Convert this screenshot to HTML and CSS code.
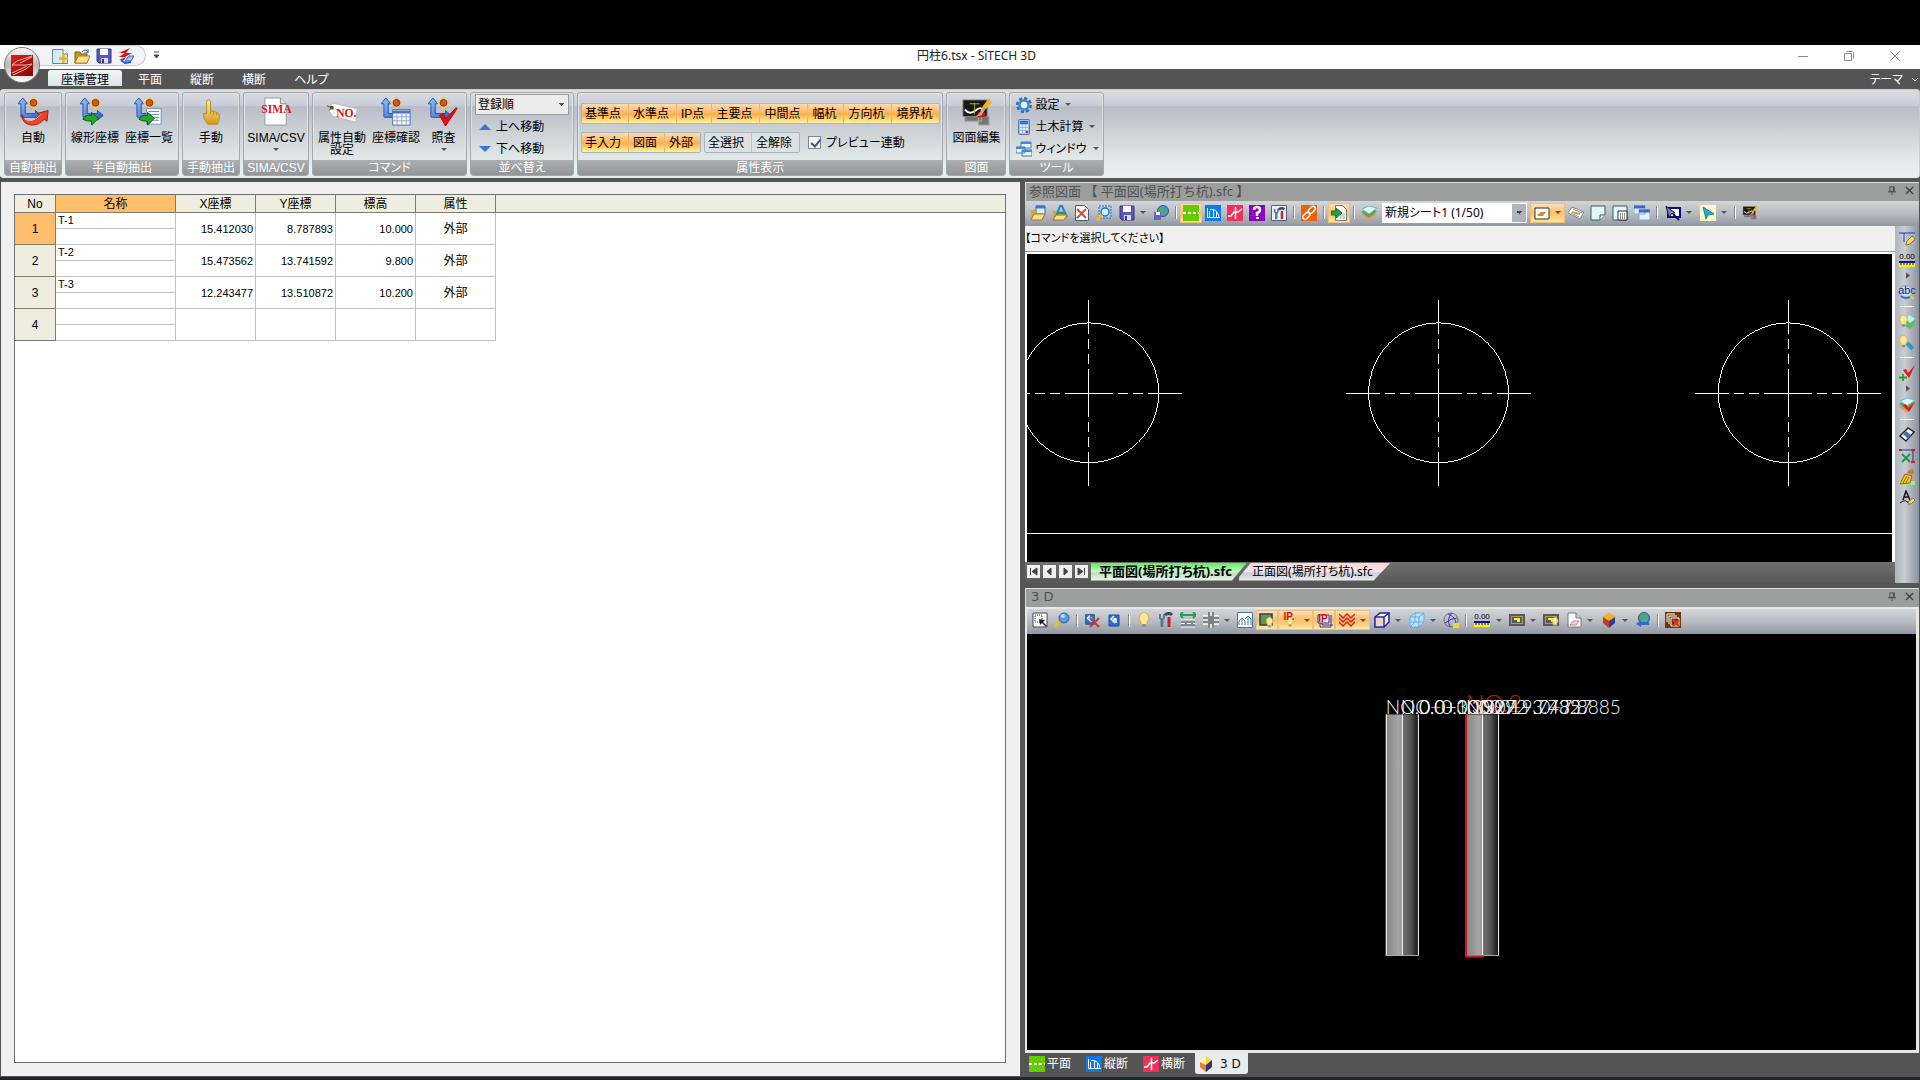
FILE: index.html
```html
<!DOCTYPE html>
<html lang="ja">
<head>
<meta charset="utf-8">
<title>円柱6.tsx - SiTECH 3D</title>
<link rel="stylesheet" href="styles.css">
</head>
<body>
<svg class="paints" aria-hidden="true">
  <defs>
    <linearGradient id="gb" x1="0" y1="0" x2="1" y2="1"><stop offset="0" stop-color="#9cc4f8"/><stop offset="1" stop-color="#2058c8"/></linearGradient>
    <linearGradient id="gy" x1="0" y1="0" x2="0" y2="1"><stop offset="0" stop-color="#fff0a0"/><stop offset="1" stop-color="#d89820"/></linearGradient>
    <linearGradient id="gr" x1="0" y1="0" x2="1" y2="1"><stop offset="0" stop-color="#e02018"/><stop offset="1" stop-color="#800808"/></linearGradient>
    <linearGradient id="cyl" x1="0" x2="1" y1="0" y2="0"><stop offset="0" stop-color="#858585"/><stop offset=".4" stop-color="#a6a6a6"/><stop offset=".5" stop-color="#989898"/><stop offset=".54" stop-color="#707070"/><stop offset=".75" stop-color="#585858"/><stop offset="1" stop-color="#161616"/></linearGradient>
  </defs>
</svg>
<svg class="sprite" aria-hidden="true">
  <symbol id="axis" viewBox="0 0 32 32">
    <path d="M5 1 10 7H7.500V17H18V14l6 5-6 5V21H4Q3 21 3 20V7H0Z" fill="url(#gb)" stroke="#2454b0"/>
    <path d="M16 0v12M10 6h12" stroke="#f8d030" stroke-width="3"/><circle cx="16" cy="6" r="3.500" fill="#d05828" stroke="#963010"/>
  </symbol>
  <symbol id="auto" viewBox="0 0 32 32"><use href="#axis" width="32" height="32"/><path d="M4 18q2 9 12 6 5-2 7-5l-3-2 11-3-1 11-3-2q-5 6-13 6Q4 28 4 18Z" fill="#ee4428" stroke="#a81808"/><path d="M7 23q7 5 17-5" stroke="#ffb8a0" fill="none"/></symbol>
  <symbol id="line-axis" viewBox="0 0 32 32"><use href="#axis" width="32" height="32"/><path d="M3 23q2-5 9-4v-3l7 6-7 7v-4q-6 0-9-2Z" fill="#28a828" stroke="#085808"/></symbol>
  <symbol id="list-axis" viewBox="0 0 32 32"><use href="#axis" width="32" height="32"/><path d="M13 12h15v16H13Z" fill="#fff" stroke="#7890b8"/><path d="M15 15h11M15 18h11M15 21h11M15 24h11" stroke="#6088c8"/><path d="M5 23q2-5 9-4v-3l7 6-7 7v-4q-6 0-9-2Z" fill="#28a828" stroke="#085808"/></symbol>
  <symbol id="grid-axis" viewBox="0 0 32 32"><use href="#axis" width="32" height="32"/><path d="M12 13h18v16H12Z" fill="#f4f8ff" stroke="#4870a8"/><path d="M12 14h18v3H12Z" fill="#4878c8"/><path d="M12 20.500h18M12 24.500h18M16.500 17v12M21.500 17v12M26 17v12" stroke="#98a8c0"/></symbol>
  <symbol id="check-axis" viewBox="0 0 32 32"><use href="#axis" width="32" height="32"/><path d="m12 19 4-2 2 6L29 11l1 1L18 30Z" fill="#e81010" stroke="#c00000"/></symbol>
  <symbol id="hand" viewBox="0 0 32 32"><path d="M11 17V5q0-2 2-2t2 2v9l7 2q2 1 2 3v4l-2 5H12L8 21v-4Z" fill="url(#gy)" stroke="#b88818"/><path d="M18 15v4m3-3v3M15 14v4" stroke="#b88818"/></symbol>
  <symbol id="sima" viewBox="0 0 32 32"><path d="M4 1h16l6 6v22H4Z" fill="#fff" stroke="#989898"/><path d="M20 1v6h6" fill="#ddd" stroke="#888"/><text x="16" y="16" text-anchor="middle" class="red-serif">SIMA</text></symbol>
  <symbol id="no" viewBox="0 0 32 32"><path d="m5 6 26 6-1 14-24-6-4-6Z" fill="#f8f8f8" stroke="#bbb"/><circle cx="5" cy="11" r="2" fill="#604828"/><path d="M5 11 0 9m5 2-3 3" stroke="#604828"/><text x="20" y="21" text-anchor="middle" class="red-serif">NO.</text></symbol>
  <symbol id="draw" viewBox="0 0 32 32"><path d="M18 20h11v9H18ZM4 20h17v5H4Z" fill="#777" stroke="#aaa"/><path d="M2 3h25v17H2Z" fill="#181818" stroke="#888"/><path d="M4 13q5 6 11 1t8 0" stroke="#fff" stroke-width="2" fill="none"/><path d="M14 6v12M9 7h10" stroke="#b0b020"/><path d="M17 16h8v5h-8Z" fill="#b02020"/><path d="m29 1 3 5-7 7-3-3Z" fill="#f0b818"/><path d="m22 10 3 3-4 6-6 1q5-3 7-10Z" fill="#d8a080"/></symbol>
  <symbol id="gear" viewBox="0 0 16 16"><circle cx="8" cy="8" r="6.500" fill="none" stroke="#3070b0" stroke-width="3" stroke-dasharray="3 2"/><circle cx="8" cy="8" r="4.500" fill="#e4f0fa" stroke="#3c8cd0" stroke-width="2.500"/></symbol>
  <symbol id="calc" viewBox="0 0 16 16"><rect x="2.500" y=".5" width="11" height="15" rx="1" fill="#98b8ee" stroke="#5878b8"/><path d="M4 2h8v3H4Z" fill="#4070c8"/><path d="M4 7h2M7 7h2M10 7h2M4 10h2M7 10h2M10 10h2M4 13h2M7 13h2" stroke="#fff" stroke-width="1.500"/><path d="M10 13h2" stroke="#d02020" stroke-width="2"/></symbol>
  <symbol id="windows" viewBox="0 0 16 16"><path d="M5 1h10v6H5ZM0 6h9v6H0ZM6 9h10v6H6Z" fill="#f4faff" stroke="#4878b0"/><path d="M5 2h10M0 7h9M6 10h10" stroke="#4888d8" stroke-width="2"/></symbol>
  <symbol id="new" viewBox="0 0 16 16"><path d="M.5 1.500h11l4 4v10H.5Z" fill="#d4ecfa" stroke="#688098"/><path d="M11 1v5h5" fill="#fff" stroke="#688098"/><path d="M11.500 6v9M7 10.500h9" stroke="#f0b020" stroke-width="2.500"/></symbol>
  <symbol id="open" viewBox="0 0 16 16"><path d="M1 4h5l1 2h6v9H1Z" fill="#c89828" stroke="#806010"/><path d="m1 15 3-7h12l-3 7Z" fill="#ffe490" stroke="#a88020"/><path d="M8 4q3-4 6 0M14 1v4h-4" stroke="#3870b0" fill="none"/></symbol>
  <symbol id="save" viewBox="0 0 16 16"><path d="M1 1h14v14H3l-2-2Z" fill="#5858b8" stroke="#383878"/><path d="M4 1h8v6H4Z" fill="#fff"/><path d="M5 10h7v5H5Z" fill="#dcdce8"/><path d="M6 11h2v4H6Z" fill="#383878"/></symbol>
  <symbol id="run" viewBox="0 0 16 16"><path d="m12 0-9 4-2 1h6l-6 4h6l7-4H8ZM1 12l7-3-2 3Z" fill="#d01818"/><path d="m7 13 4-5h5l-3 5Z" fill="#a0c8ff" stroke="#3068c8"/><path d="m3 12 4 3 6-1" stroke="#2858b8" stroke-width="2" fill="none"/></symbol>
  <symbol id="blueopen" viewBox="0 0 16 16"><path d="M6 1h9v9H6Z" fill="#dcecff" stroke="#3868a8"/><path d="M6 2h9" stroke="#3878d8" stroke-width="3"/><path d="M1 5h5v3h7v6H1Z" fill="#d8a830"/><path d="m1 15 3-6h11l-3 6Z" fill="#ffe080" stroke="#a07820"/></symbol>
  <symbol id="aopen" viewBox="0 0 16 16"><path d="M1 6h13v9H1Z" fill="#d8a830"/><path d="m4 12 4-11h2l5 11M6 8h7" fill="none" stroke="#1890b8" stroke-width="2"/><path d="m1 15 3-5h11l-3 5Z" fill="#ffe080" stroke="#a07820"/></symbol>
  <symbol id="xpage" viewBox="0 0 16 16"><path d="M1.500.5h9l4 4v11h-13Z" fill="#fff" stroke="#505870"/><path d="m3 4 9 9m0-9-9 9" stroke="#d85030" stroke-width="2"/></symbol>
  <symbol id="search" viewBox="0 0 16 16"><path d="M3 1h12v12H3Z" fill="#a8ccf4" stroke="#3868b0" stroke-dasharray="2 1"/><circle cx="9" cy="7" r="4" fill="#d4f0ff" stroke="#2870c8" stroke-width="1.500"/><path d="m1 15 5-5" stroke="#e8c020" stroke-width="3"/></symbol>
  <symbol id="globe" viewBox="0 0 16 16"><circle cx="10" cy="6" r="5.500" fill="#4898d8" stroke="#205888"/><path d="m6 3 3-1 2 3-2 4-4-1Zm6 0 3 2-2 4Z" fill="#48b050"/><path d="M1 7h7v8H1Z" fill="#6868b0"/><path d="M3 7h4v3H3Z" fill="#fff"/></symbol>
  <symbol id="plan" viewBox="0 0 16 16"><path d="M0 0h16v16H0Z" fill="#62cc00"/><path d="M0 8h16" stroke="#fff" stroke-width="2" stroke-dasharray="3 2"/></symbol>
  <symbol id="profile" viewBox="0 0 16 16"><path d="M0 0h16v16H0Z" fill="#087ce8"/><path d="M2.500 3v9.500H15M4.500 6v6M5 4.500h3.500V12M11.500 7v5M8.500 5q4 0 5.500 7" stroke="#fff" fill="none"/></symbol>
  <symbol id="section" viewBox="0 0 16 16"><path d="M0 0h16v16H0Z" fill="#f33058"/><path d="M1 11h3l3-4h4l4-3M8.500 2v12" stroke="#fff" stroke-width="1.500" fill="none"/></symbol>
  <symbol id="help" viewBox="0 0 16 16"><path d="M0 0h16v16H0Z" fill="#9000c0"/><path d="M5 5q0-3 3-3t3 3q0 2-3 3v3" fill="none" stroke="#fff" stroke-width="2.500"/><path d="M7 12h3v2H7Z" fill="#fff"/></symbol>
  <symbol id="wrench" viewBox="0 0 16 16"><path d="M2 2v4l2 2 2-2V2" stroke="#5878a0" stroke-width="2" fill="none"/><path d="M4 8v7" stroke="#5878a0" stroke-width="3"/><path d="M7 3q4-3 7 0" stroke="#404858" stroke-width="3" fill="none"/><path d="M11 5v10" stroke="#c02828" stroke-width="3"/></symbol>
  <symbol id="tools" viewBox="0 0 16 16"><path d="M.5.5h15v15H.5Z" fill="#e8f4fa" stroke="#506078"/><use href="#wrench" x="2" y="2" width="13" height="13"/></symbol>
  <symbol id="link" viewBox="0 0 16 16"><path d="M0 0h16v16H0Z" fill="#f06008"/><g fill="none" stroke="#fff" stroke-width="1.500"><rect x="7" y="2.500" width="8" height="4.500" rx="2.200" transform="rotate(-45 11 5)"/><rect x="1.500" y="8.500" width="8" height="4.500" rx="2.200" transform="rotate(-45 5.500 11)"/></g></symbol>
  <symbol id="import" viewBox="0 0 16 16"><path d="M4.500.5h7l4 4v11h-11Z" fill="#fff" stroke="#707880"/><path d="M9 9h5M9 11h5M9 13h5" stroke="#a0a8b0"/><path d="M0 6h5V3l6 5-6 5v-3H0Z" fill="#28a040" stroke="#107028"/></symbol>
  <symbol id="layers" viewBox="0 0 16 16"><path d="m0 10 8 6 8-7-8-3Z" fill="#e89858"/><path d="m0 7 8 6 8-7-8-3Z" fill="#58a858"/><path d="m1 4 7 5 8-6-8-2Z" fill="#d8fafa" stroke="#68b8c8"/></symbol>
  <symbol id="frame" viewBox="0 0 16 16"><path d="M1 3h14v11H1Z" fill="#fff" stroke="#303030"/><path d="m3 10 4-3h5l-3 4H5Z" fill="#c89020"/></symbol>
  <symbol id="tilt" viewBox="0 0 16 16"><path d="m4 2 12 5-4 7L0 8Z" fill="#fff" stroke="#888"/><path d="m5 4 9 4M3 8l8 4" stroke="#50a0c0"/><path d="m4 7 8 2" stroke="#e8a020" stroke-width="2"/></symbol>
  <symbol id="note" viewBox="0 0 16 16"><path d="M1 1h14v9l-5 5H1Z" fill="#e0fafa" stroke="#405860"/><path d="M15 10h-5v5" fill="#fff" stroke="#405860"/></symbol>
  <symbol id="notegrid" viewBox="0 0 16 16"><path d="M1 1h14v14H1Z" fill="#e0fafa" stroke="#405860"/><path d="M6 6h9v9H6Z" fill="#fff" stroke="#303030"/><path d="M8 9h6M8 11h6M8 13h6" stroke="#303030" stroke-dasharray="1 1"/></symbol>
  <symbol id="cascade" viewBox="0 0 16 16"><path d="M0 1h11v8H0ZM5 5h11v10H5Z" fill="#e4f2ff" stroke="#80a8e0"/><path d="M0 2h11M5 6h11" stroke="#3868c8" stroke-width="3"/></symbol>
  <symbol id="pick" viewBox="0 0 16 16"><path d="M3 3h12v9H3Z" fill="#fff" stroke="#0808a0" stroke-width="2"/><path d="m1 1 9 7-4 1-2 4Z" fill="#6888b0" stroke="#101030"/><path d="m8 9 6 6" stroke="#101030" stroke-width="2"/></symbol>
  <symbol id="arrowbox" viewBox="0 0 16 16"><path d="M0 0h16v16H0Z" fill="#fffac0"/><path d="m3 2 11 7-6 1-2 4Z" fill="#28a8c8" stroke="#1888a8"/></symbol>
  <symbol id="pencil" viewBox="0 0 16 16"><path d="M0 2h16M5 2v9" stroke="#2838d0" fill="none"/><path d="m7 14 1-4 5-5 3 3-5 5Z" fill="#f8d860" stroke="#907838"/></symbol>
  <symbol id="ruler" viewBox="0 0 18 16"><text x="9" y="7" text-anchor="middle" class="tiny">0.00</text><path d="M1 11h16v4H1Z" fill="#f8f020"/><path d="M1 10h16" stroke="#101090" stroke-width="2"/><path d="M3 11v2m3-2v2m3-2v2m3-2v2m3-2v2" stroke="#101090"/></symbol>
  <symbol id="abc" viewBox="0 0 18 16"><circle cx="8" cy="8" r="6.500" fill="#c8dcff" stroke="#88a8e8"/><path d="M3 12q5 4 10 0" stroke="#4068c8" stroke-width="2" fill="none"/><path d="m12 12 4 3" stroke="#f0d020" stroke-width="2"/><text x="9" y="10" text-anchor="middle" class="abc">abc</text></symbol>
  <symbol id="bulb" viewBox="0 0 16 16"><path d="M5 10Q2 7 4 3q4-5 8 0 2 4-1 7v3H5Z" fill="#ffe898" stroke="#d8b040"/><path d="M6 12h4v3H6Z" fill="#889098"/></symbol>
  <symbol id="bulblayer" viewBox="0 0 16 16"><path d="m6 4 5-3 5 4v6l-5 4-5-3Z" fill="#68b868"/><path d="m6 4 5-3 5 4-5 4Z" fill="#b8f4f8"/><use href="#bulb" x="-2" y="0" width="13" height="14"/></symbol>
  <symbol id="bulbpen" viewBox="0 0 16 16"><use href="#bulb" x="-2" y="0" width="13" height="13"/><path d="m8 8 6 6" stroke="#3898c0" stroke-width="4"/></symbol>
  <symbol id="pluscheck" viewBox="0 0 16 16"><path d="m4 5 3-1 2 4 7-8-6 13Z" fill="#e01818"/><path d="M4 9v7M0 12.500h8" stroke="#30a030" stroke-width="2"/></symbol>
  <symbol id="layercheck" viewBox="0 0 16 16"><use href="#layers" width="16" height="16"/><path d="m4 8 3-1 2 4 7-6-6 10Z" fill="#e01818"/></symbol>
  <symbol id="eraser" viewBox="0 0 16 16"><path d="m1 9 8-8 6 4-8 9Z" fill="#f8f8ff" stroke="#202838" stroke-width="1.500"/><path d="m4 7 3-3 5 4-3 4Z" fill="#4870b8"/></symbol>
  <symbol id="cut" viewBox="0 0 16 16"><path d="M1 2h14M14 2v13" stroke="#2030b8" fill="none"/><path d="m3 6 8 8m0-8-8 8" stroke="#209840" stroke-width="2"/><path d="M0 1h3v2H0Zm12 0h4v2h-4Zm0 12h4v2h-4Z" fill="#e01818"/></symbol>
  <symbol id="broom" viewBox="0 0 16 16"><path d="M0 12h16v4H0Z" fill="#98f080"/><path d="m10 1 4-1 1 4-2 2-5-2Z" fill="#c08040"/><path d="m6 5 7 2-2 7-10 1Z" fill="#f8c828" stroke="#a06010"/><path d="m8 7-4 7m6-6-3 6" stroke="#a06010"/></symbol>
  <symbol id="apen" viewBox="0 0 16 16"><path d="m4 10 3-9 4 9M5 7h5" stroke="#181818" stroke-width="1.500" fill="none"/><path d="M1 13q6-5 9 1" stroke="#181818" fill="none"/><path d="m9 14 1-3 4-3 2 2-4 4Z" fill="#f8d860" stroke="#907838"/></symbol>
  <symbol id="selwin" viewBox="0 0 16 16"><path d="M1 1h14v14H1Z" fill="#fff" stroke="#484858"/><path d="M3 3h7v7H3Z" fill="none" stroke="#303040" stroke-dasharray="1 1"/><path d="m7 7 6 1-2 2 4 4-1 1-4-4-2 2Z" fill="#182038"/></symbol>
  <symbol id="lens" viewBox="0 0 16 16"><path d="m1 15 6-7" stroke="#e8c018" stroke-width="3"/><circle cx="10" cy="6" r="5" fill="#5898e8" stroke="#3060a8"/><circle cx="9" cy="4" r="2" fill="#c0e0ff"/></symbol>
  <symbol id="undo" viewBox="0 0 16 16"><path d="M3 3h10v11H3Z" fill="#2870d0" stroke="#1848a0"/><path d="m8 4-3 3 3 3V7h2v4" stroke="#fff" fill="none" stroke-width="1.500"/></symbol>
  <symbol id="undox" viewBox="0 0 16 16"><use href="#undo" x="-1" width="14" height="14"/><path d="m6 6 9 9m0-9-9 9" stroke="#e03020" stroke-width="2"/></symbol>
  <symbol id="span" viewBox="0 0 16 16"><path d="M0 3h16M3 0 0 3l3 3M13 0l3 3-3 3" fill="none" stroke="#20a058" stroke-width="2"/><path d="M1 8h14v7H1Z" fill="#808890"/><path d="M1 11.500h14" stroke="#fff" stroke-dasharray="4 2"/><path d="M1 8h14M1 15h14" stroke="#fff"/></symbol>
  <symbol id="cross" viewBox="0 0 16 16"><path d="M0 4h16v8H0ZM5 0h6v16H5Z" fill="#808080"/><path d="M0 8h5m6 0h5M8 0v4m0 8v4M0 4h5M11 4h5M0 12h5M11 12h5" stroke="#fff" stroke-width="1.500"/></symbol>
  <symbol id="house" viewBox="0 0 16 16"><path d="M.5.500h15v15H.5Z" fill="#fff" stroke="#4878a8"/><path d="M2 13V9l3-3 3 3v4m0-6 3-3 3 3v6M5 6v7m6-9v9" fill="none" stroke="#4078b0"/></symbol>
  <symbol id="greenbulb" viewBox="0 0 16 16"><path d="M1 2h12v11H1Z" fill="#58a048" stroke="#303868" stroke-width="1.500"/><use href="#bulb" x="5" y="5" width="11" height="11"/></symbol>
  <symbol id="ipbulb" viewBox="0 0 18 16"><use href="#bulb" x="4" y="4" width="10" height="12"/><text x="8" y="8" text-anchor="middle" class="ip">IP.</text></symbol>
  <symbol id="iplist" viewBox="0 0 18 16"><path d="M5 7v8h11V3M7 5v8h11" fill="none" stroke="#3838a0"/><path d="M3 3h11v8H3Z" fill="#ffe8d0" stroke="#3838a0"/><text x="8" y="10" text-anchor="middle" class="ip">IP</text></symbol>
  <symbol id="zig" viewBox="0 0 16 16"><path d="m0 2 4 4 4-4 4 4 4-4M0 6l4 4 4-4 4 4 4-4M0 10l4 4 4-4 4 4 4-4" fill="none" stroke="#d02020" stroke-width="1.500"/></symbol>
  <symbol id="cube" viewBox="0 0 16 16"><path d="M1 5 6 1h9v9l-5 5H1Z" fill="#fff" stroke="#2020a0" stroke-width="1.500"/><path d="M1 5h9v10M10 5l5-4" fill="none" stroke="#2020a0" stroke-width="1.500"/><path d="M2 6h7v8H2Z" fill="#e8d8c8"/></symbol>
  <symbol id="bcube" viewBox="0 0 16 16"><path d="m1 5 5-4h9v9l-5 5H1Z" fill="#c0e0ff" stroke="#60a8e8"/><path d="M1 5h9v10M10 5l5-4M6 1v9H1m5 0 9 0M6 10l-5 5" fill="none" stroke="#60a8e8"/></symbol>
  <symbol id="sphere" viewBox="0 0 16 16"><circle cx="8" cy="8" r="7" fill="none" stroke="#687088"/><path d="M2 11Q8 6 14 6M9 1Q3 7 7 15M5 2q8 3 8 10" stroke="#3838c0" fill="none"/><path d="M10 11h6v5h-6Z" fill="#f0d830"/></symbol>
  <symbol id="yframe" viewBox="0 0 16 16"><path d="M0 2h16v12H0Z" fill="#585858"/><path d="M2.500 4.500h11v7h-11Z" fill="none" stroke="#f8f040" stroke-dasharray="1 1"/><path d="M5 6h6v4H8V8H5Z" fill="#f8f040"/></symbol>
  <symbol id="ybulb" viewBox="0 0 16 16"><use href="#yframe" width="16" height="16"/><use href="#bulb" x="7" y="4" width="10" height="12"/></symbol>
  <symbol id="page" viewBox="0 0 16 16"><path d="M2 1h8l5 5v9H2Z" fill="#fff" stroke="#707888"/><path d="M10 1v5h5" fill="#ccd" stroke="#707888"/><path d="m4 13 3-4h6l-3 4Z" fill="#f8d0c8" stroke="#d08880"/></symbol>
  <symbol id="box" viewBox="0 0 16 16"><path d="m8 1 6 3v7l-6 5-6-5V4Z" fill="#f0b020"/><path d="m2 5 6 4v7l-6-5Z" fill="#c83828"/><path d="m14 5-6 4v7l6-5Z" fill="#2840a0"/></symbol>
  <symbol id="box2" viewBox="0 0 16 16"><path d="m8 0 6 4v7l-6 5-6-5V4Z" fill="#f8d848"/><path d="m2 6 6 3v7l-6-5Z" fill="#f07828"/><path d="m14 4-6 5v7l6-5Z" fill="#283878"/><path d="M2 4 8 0v9L2 6Z" fill="#fff0c0"/></symbol>
  <symbol id="globeback" viewBox="0 0 16 16"><circle cx="9" cy="6" r="5.500" fill="#48a0c8" stroke="#205888"/><path d="m5 3 4-2 2 4-3 4-3-3Z" fill="#50b050"/><path d="m1 12 5-4v2h8v3H6v2Z" fill="#3868c8"/></symbol>
  <symbol id="stackx" viewBox="0 0 16 16"><path d="M0 0h16v16H0Z" fill="#703808"/><path d="M2 10V2h8M4 12V4h8M6 6h8v8H6Z" fill="none" stroke="#fff"/><path d="m8 8 6 6m0-6-6 6" stroke="#e83818" stroke-width="2"/></symbol>
  <symbol id="pin" viewBox="0 0 10 10"><path d="M2 1h5v5H2ZM6 1v5M0 6.500h9M4.500 7v3" fill="none" stroke="#444"/></symbol>
  <symbol id="close" viewBox="0 0 10 10"><path d="m1 1 8 8m0-8L1 9" stroke="#444" stroke-width="1.500"/></symbol>
</svg>

<div class="app">
  <header class="titlebar">
    <div class="qat">
      <button aria-label="新規"><svg class="i"><use href="#new"/></svg></button>
      <button aria-label="開く"><svg class="i"><use href="#open"/></svg></button>
      <button aria-label="保存"><svg class="i"><use href="#save"/></svg></button>
      <button aria-label="実行"><svg class="i"><use href="#run"/></svg></button>
    </div>
    <button class="qat-more" aria-label="カスタマイズ"><svg width="7" height="8"><path d="M1 1h5M1 4h5L3.500 7Z" fill="#444" stroke="#444"/></svg></button>
    <h1>円柱6.tsx - SiTECH 3D</h1>
    <div class="winbtns">
      <button aria-label="最小化"><svg width="12" height="12"><path d="M1 6.500h10" stroke="#888"/></svg></button>
      <button aria-label="元に戻す"><svg width="12" height="12"><path d="M1.500 3.500h7v7h-7ZM3.500 1.500h6l1 1v6" fill="none" stroke="#888"/></svg></button>
      <button aria-label="閉じる"><svg width="12" height="12"><path d="m1 1 10 10m0-10L1 11" stroke="#888"/></svg></button>
    </div>
  </header>
  <button class="orb" aria-label="メニュー"><svg viewBox="0 0 38 38"><defs><linearGradient id="orbg" x1="0" y1="0" x2="0" y2="1"><stop offset="0" stop-color="#fff"/><stop offset=".5" stop-color="#b8b8bc"/><stop offset="1" stop-color="#fff"/></linearGradient></defs><circle cx="19" cy="19" r="17.500" fill="url(#orbg)" stroke="#777"/><path d="M8 9h22v21H8Z" fill="url(#gr)"/><path d="M29 10 14 15 9 19h14l6-1-6 5-13 6m-1-2 15-7m5-9-12 6" fill="none" stroke="#f0b0a0"/></svg></button>
  <nav class="tabs">
    <a class="on" href="#t1">座標管理</a><a href="#t2">平面</a><a href="#t3">縦断</a><a href="#t4">横断</a><a href="#t5">ヘルプ</a>
    <a class="theme" href="#theme">テーマ <svg width="7" height="5"><path d="m0 1 3 3 3-3" fill="none" stroke="#fff"/></svg></a>
  </nav>
  <section class="ribbon">
    <div class="group"><div class="body"><button class="big narrow"><svg><use href="#auto"/></svg>自動</button></div><h2>自動抽出</h2></div>
    <div class="group"><div class="body"><button class="big"><svg><use href="#line-axis"/></svg>線形座標</button><button class="big"><svg><use href="#list-axis"/></svg>座標一覧</button></div><h2>半自動抽出</h2></div>
    <div class="group"><div class="body"><button class="big narrow"><svg><use href="#hand"/></svg>手動</button></div><h2>手動抽出</h2></div>
    <div class="group"><div class="body"><button class="big wider"><svg><use href="#sima"/></svg>SIMA/CSV<i class="caret"></i></button></div><h2>SIMA/CSV</h2></div>
    <div class="group"><div class="body"><button class="big"><svg><use href="#no"/></svg>属性自動<br>設定</button><button class="big"><svg><use href="#grid-axis"/></svg>座標確認</button><button class="big slim"><svg><use href="#check-axis"/></svg>照査<i class="caret"></i></button></div><h2>コマンド</h2></div>
    <div class="group"><div class="body stack">
      <select aria-label="並べ替え"><option>登録順</option></select>
      <button class="small"><svg width="12" height="6"><path d="M0 6 6 0l6 6Z" fill="#3878d8"/></svg>上へ移動</button>
      <button class="small"><svg width="12" height="6"><path d="m0 0 6 6 6-6Z" fill="#3878d8"/></svg>下へ移動</button>
    </div><h2>並べ替え</h2></div>
    <div class="group"><div class="body attrs">
      <div class="row"><div class="seg hot"><button>基準点</button><button>水準点</button><button>IP点</button><button>主要点</button><button>中間点</button><button>幅杭</button><button>方向杭</button><button>境界杭</button></div></div>
      <div class="row"><div class="seg hot"><button>手入力</button><button>図面</button><button>外部</button></div><div class="seg"><button>全選択</button><button>全解除</button></div><label><input type="checkbox" checked>プレビュー連動</label></div>
    </div><h2>属性表示</h2></div>
    <div class="group"><div class="body"><button class="big"><svg><use href="#draw"/></svg>図面編集</button></div><h2>図面</h2></div>
    <div class="group"><div class="body stack tools">
      <button class="small"><svg class="i"><use href="#gear"/></svg>設定<i class="caret"></i></button>
      <button class="small"><svg class="i"><use href="#calc"/></svg>土木計算<i class="caret"></i></button>
      <button class="small"><svg class="i"><use href="#windows"/></svg>ウィンドウ<i class="caret"></i></button>
    </div><h2>ツール</h2></div>
  </section>

  <main>
    <section class="left">
      <div class="sheet">
        <table>
          <colgroup><col class="c-no"><col class="c-name"><col class="c-val"><col class="c-val"><col class="c-val"><col class="c-val"><col></colgroup>
          <thead><tr><th>No</th><th class="sel">名称</th><th>X座標</th><th>Y座標</th><th>標高</th><th>属性</th><th class="last"></th></tr></thead>
          <tbody>
            <tr><th class="sel">1</th><td class="name"><div>T-1</div><div></div></td><td>15.412030</td><td>8.787893</td><td>10.000</td><td class="mid">外部</td></tr>
            <tr><th>2</th><td class="name"><div>T-2</div><div></div></td><td>15.473562</td><td>13.741592</td><td>9.800</td><td class="mid">外部</td></tr>
            <tr><th>3</th><td class="name"><div>T-3</div><div></div></td><td>12.243477</td><td>13.510872</td><td>10.200</td><td class="mid">外部</td></tr>
            <tr><th>4</th><td class="name"><div></div><div></div></td><td></td><td></td><td></td><td></td></tr>
          </tbody>
        </table>
      </div>
    </section>

    <div class="right">
      <section class="pane ref">
        <div class="dock"><h2>参照図面 【 平面図(場所打ち杭).sfc 】</h2><button aria-label="固定"><svg><use href="#pin"/></svg></button><button aria-label="閉じる"><svg><use href="#close"/></svg></button></div>
        <div class="bar">
          <button><svg class="i"><use href="#blueopen"/></svg></button><button><svg class="i"><use href="#aopen"/></svg></button><button><svg class="i"><use href="#xpage"/></svg></button><button><svg class="i"><use href="#search"/></svg></button><button class="dd"><svg class="i"><use href="#save"/></svg><i class="caret"></i></button><button><svg class="i"><use href="#globe"/></svg></button><hr>
          <button class="hl"><svg class="i"><use href="#plan"/></svg></button><button><svg class="i"><use href="#profile"/></svg></button><button><svg class="i"><use href="#section"/></svg></button><button><svg class="i"><use href="#help"/></svg></button><button><svg class="i"><use href="#tools"/></svg></button><hr>
          <button><svg class="i"><use href="#link"/></svg></button><hr><button class="hl"><svg class="i"><use href="#import"/></svg></button><hr><button><svg class="i"><use href="#layers"/></svg></button>
          <select aria-label="シート"><option>新規シート1 (1/50)</option></select>
          <button class="dd hl"><svg class="i"><use href="#frame"/></svg><i class="caret"></i></button><button><svg class="i"><use href="#tilt"/></svg></button><button><svg class="i"><use href="#note"/></svg></button><button><svg class="i"><use href="#notegrid"/></svg></button><button><svg class="i"><use href="#cascade"/></svg></button><hr>
          <button class="dd"><svg class="i"><use href="#pick"/></svg><i class="caret"></i></button><button class="dd"><svg class="i"><use href="#arrowbox"/></svg><i class="caret"></i></button><hr><button><svg class="i"><use href="#draw"/></svg></button>
        </div>
        <div class="split">
          <div class="work">
            <p class="prompt">【コマンドを選択してください】</p>
            <div class="canvas flat"><svg viewBox="0 0 866 308" preserveAspectRatio="none">
              <g fill="none" stroke="#fff" shape-rendering="crispEdges">
                <circle cx="62" cy="139" r="70"/><circle cx="412" cy="139" r="70"/><circle cx="762" cy="139" r="70"/>
                <path d="M62 46.500v186M412 46.500v186M762 46.500v186M-31 139.500h186M319 139.500h186M669 139.500h186" stroke-dasharray="34 5 10 5 10 5 48 5 10 5 10 5 34"/>
                <path d="M0 279.500h866"/>
              </g></svg></div>
            <div class="sheets">
              <button aria-label="最初"><svg viewBox="0 0 13 13"><path d="M3.500 3v7M10 3v7L5 6.500Z"/></svg></button><button aria-label="前"><svg viewBox="0 0 13 13"><path d="M8 3v7L4 6.500Z"/></svg></button><button aria-label="次"><svg viewBox="0 0 13 13"><path d="M5 3v7l4-3.500Z"/></svg></button><button aria-label="最後"><svg viewBox="0 0 13 13"><path d="M3 3v7l5-3.500ZM9.500 3v7"/></svg></button>
              <a class="tab on" href="#s1">平面図(場所打ち杭).sfc</a><a class="tab" href="#s2">正面図(場所打ち杭).sfc</a>
            </div>
          </div>
          <div class="vbar">
            <button><svg class="i"><use href="#pencil"/></svg></button><button><svg class="w"><use href="#ruler"/></svg></button><i class="rt"></i><button><svg class="w"><use href="#abc"/></svg></button><hr>
            <button><svg class="i"><use href="#bulblayer"/></svg></button><button><svg class="i"><use href="#bulbpen"/></svg></button><hr>
            <button><svg class="i"><use href="#pluscheck"/></svg></button><i class="rt"></i><button><svg class="i"><use href="#layercheck"/></svg></button><hr>
            <button><svg class="i"><use href="#eraser"/></svg></button><button><svg class="i"><use href="#cut"/></svg></button><button><svg class="i"><use href="#broom"/></svg></button><button><svg class="i"><use href="#apen"/></svg></button>
          </div>
        </div>
      </section>

      <section class="pane view">
        <div class="dock"><h2 class="wide">3 D</h2><button aria-label="固定"><svg><use href="#pin"/></svg></button><button aria-label="閉じる"><svg><use href="#close"/></svg></button></div>
        <div class="inner">
        <div class="bar">
          <button><svg class="i"><use href="#selwin"/></svg></button><button><svg class="i"><use href="#lens"/></svg></button><hr><button><svg class="i"><use href="#undox"/></svg></button><button><svg class="i"><use href="#undo"/></svg></button><hr>
          <button><svg class="i"><use href="#bulb"/></svg></button><button><svg class="i"><use href="#wrench"/></svg></button><button><svg class="i"><use href="#span"/></svg></button><button class="dd"><svg class="i"><use href="#cross"/></svg><i class="caret"></i></button><button><svg class="i"><use href="#house"/></svg></button><button class="hl"><svg class="i"><use href="#greenbulb"/></svg></button><button class="dd hl"><svg class="w"><use href="#ipbulb"/></svg><i class="caret"></i></button><button class="hl"><svg class="w"><use href="#iplist"/></svg></button><button class="dd hl"><svg class="i"><use href="#zig"/></svg><i class="caret"></i></button><button class="dd"><svg class="i"><use href="#cube"/></svg><i class="caret"></i></button><button class="dd"><svg class="i"><use href="#bcube"/></svg><i class="caret"></i></button><button><svg class="i"><use href="#sphere"/></svg></button><hr>
          <button class="dd"><svg class="w"><use href="#ruler"/></svg><i class="caret"></i></button><button class="dd"><svg class="i"><use href="#yframe"/></svg><i class="caret"></i></button><button><svg class="i"><use href="#ybulb"/></svg></button><button class="dd"><svg class="i"><use href="#page"/></svg><i class="caret"></i></button><button class="dd"><svg class="i"><use href="#box"/></svg><i class="caret"></i></button><button><svg class="i"><use href="#globeback"/></svg></button><hr><button><svg class="i"><use href="#stackx"/></svg></button>
        </div>
        <div class="canvas"><svg viewBox="0 0 887 415">
          <g class="label3d"><text x="438" y="78" class="redlabel">NO.2</text><text x="358" y="80">NO.0+0.0000</text><text x="373" y="80">NO.0+3.3927</text><text x="391" y="80">0.0+10.3992</text><text x="438" y="80">NO.0+9.7485</text><text x="452" y="80">N0.1+3.7327</text><text x="511" y="80">0+7.8885</text></g>
          <rect x="358" y="80" width="32" height="241" fill="url(#cyl)"/><rect x="438" y="80" width="32" height="241" fill="url(#cyl)"/>
          <path d="M358.500 80v241M374.500 80v241M390.500 80v241M454.500 80v241M470.500 80v241" stroke="#fff"/><path d="M358 320.500h33M438 320.500h33" stroke="#aaa"/>
          <path d="M438 80v241M437 321.500h19" stroke="#d81018" stroke-width="2"/>
        </svg></div>
        </div>
        <nav class="views"><a href="#v1"><svg class="i"><use href="#plan"/></svg>平面</a><a href="#v2"><svg class="i"><use href="#profile"/></svg>縦断</a><a href="#v3"><svg class="i"><use href="#section"/></svg>横断</a><a class="on" href="#v4"><svg class="i"><use href="#box2"/></svg><span class="wide">3 D</span></a></nav>
      </section>
    </div>
  </main>
</div>
</body>
</html>
```

FILE: styles.css
```css
* { box-sizing: border-box; }
body {
  margin: 0;
  background: #000;
  color: #000;
  font: 12px/14px "Liberation Sans", "Noto Sans CJK JP", sans-serif;
  font-feature-settings: "palt";
}
button, select, input { font: inherit; font-feature-settings: inherit; color: inherit; }
button { padding: 0; border: 0; background: none; white-space: nowrap; }
a { color: inherit; text-decoration: none; white-space: nowrap; }
h1, h2, p { margin: 0; font-size: 12px; font-weight: 400; }
svg { display: block; flex: none; }
.paints { position: absolute; width: 0; height: 0; }
.sprite { display: none; }
.i { width: 16px; height: 16px; }
.w { width: 18px; height: 16px; }
.red-serif { font: bold 12px "Liberation Serif", serif; fill: #d81818; }
.tiny { font: 8px "Liberation Sans", sans-serif; }
.abc { font: 11px "Liberation Sans", sans-serif; fill: #203060; }
.ip { font: bold 10px "Liberation Sans", sans-serif; fill: #d01010; }
.caret { width: 0; height: 0; border: 3px solid transparent; border-top-color: #555; border-bottom: 0; flex: none; }

.app {
  position: relative;
  min-height: 100vh;
  display: flex;
  flex-direction: column;
  padding-top: 45px;
  border-bottom: 3px solid #1c2528;
}

/* title bar */
.titlebar { display: flex; align-items: flex-start; height: 24px; background: #fff; padding-left: 24px; line-height: 21px; }
.qat {
  display: flex;
  align-items: center;
  gap: 6px;
  height: 21px;
  padding: 0 11px 0 28px;
  border: 1px solid #c4c8cc;
  border-left: 0;
  border-radius: 0 11px 11px 0;
  background: #f2f4f7;
}
.qat-more { margin: 6px 0 0 7px; }
.titlebar h1 { flex: 1; text-align: center; font-family: "Noto Sans", "Noto Sans CJK JP", sans-serif; padding-right: 4px; color: #222; }
.winbtns { display: flex; gap: 34px; padding: 5px 19px 0 0; }
.orb { position: absolute; left: 3px; top: 46px; width: 38px; height: 38px; }

/* tabs */
.tabs { display: flex; height: 20px; padding: 1px 1px 0 48px; background: #545454; color: #fff; line-height: 20px; }
.tabs a { padding: 0 14px; }
.tabs .on { padding: 0 13px; margin-right: 2px; color: #000; background: linear-gradient(#f4f6f6, #d4e0e2); border-radius: 3px 3px 0 0; }
.tabs .theme { display: flex; align-items: center; gap: 9px; margin-left: auto; padding: 0; }

/* ribbon */
.ribbon {
  display: flex;
  gap: 3px;
  height: 89px;
  padding: 2px 4px 2px;
  border: solid #c8ccd0;
  border-width: 1px 1px 0 0;
  border-radius: 3px;
  background: linear-gradient(#dadde2, #c8ccd6 18%, #b8bdc9 19%, #d2d7da 55%, #e4eeec 85%, #e8f0ee);
  box-shadow: 0 0 0 3px #545454;
}
.group { flex: none; display: flex; flex-direction: column; border: 1px solid #a4a8ae; border-radius: 3px; overflow: hidden; box-shadow: inset 0 0 0 1px #e0e4e6; }
.group h2 { height: 15px; line-height: 16px; text-align: center; color: #fff; background: linear-gradient(#acaeb0, #929496); }
.body { flex: 1; display: flex; justify-content: center; padding: 4px 2px 0; }
.big { display: flex; flex-direction: column; align-items: center; width: 54px; line-height: 12px; }
.big svg { width: 31px; height: 31px; margin-bottom: 4px; }
.big .caret { margin-top: 4px; }
.narrow { width: 52px; }
.wider { width: 60px; }
.slim { width: 41px; }
.stack { flex-direction: column; justify-content: flex-start; gap: 1px; padding: 1px 4px 0; }
.stack select { width: 94px; height: 21px; }
select {
  appearance: none;
  border: 1px solid #9a9ca0;
  border-radius: 0;
  padding: 0 2px;
  background:
    linear-gradient(45deg, transparent 50%, #555 50%) no-repeat right 7px center / 3px 3px,
    linear-gradient(-45deg, transparent 50%, #555 50%) no-repeat right 4px center / 3px 3px,
    #ececec;
}
.small { display: flex; align-items: center; gap: 5px; height: 21px; padding-left: 4px; }
.tools { padding: 1px 4px 0 6px; }
.tools .small { gap: 3px; padding: 0; }
.tools .caret { margin-left: 3px; }
.attrs { flex-direction: column; justify-content: flex-start; gap: 8px; padding: 10px 2px 0 3px; }
.row { display: flex; gap: 3px; }
.seg { display: flex; height: 21px; border: 1px solid #a8b8bc; border-radius: 2px; background: #dce2e4; }
.seg button { padding: 0 7px 0 4px; border-left: 1px solid #b8c4c8; }
.seg button:first-child { border-left: 0; padding-left: 3px; }
.hot { background: linear-gradient(#fbdcb4, #fdb760 45%, #fdb050 55%, #ffe488 90%, #fff0a0); }
.hot button { border-color: #e8b868; }
.row label { display: flex; align-items: center; gap: 5px; margin-left: 5px; }
.row input { appearance: none; width: 13px; height: 13px; margin: 0; border: 1px solid #808890; background: #f4f4f4; }
.row input:checked::before { content: ""; display: block; width: 4px; height: 8px; margin: 0 0 0 4px; border: solid #3a5888; border-width: 0 2px 2px 0; transform: rotate(40deg); }

/* workspace */
main { flex: 1; display: grid; grid-template-columns: minmax(0, 1019fr) minmax(0, 894fr); gap: 5px; padding: 4px 1px 1px 1px; background: #545454; }
.left { display: flex; padding: 12px 13px 13px 13px; background: #f0f0f0; border-right: 1px solid #fff; }
.sheet { flex: 1; min-width: 0; border: 1px solid #707070; background: #fff; }
table { width: 100%; table-layout: fixed; border-collapse: separate; border-spacing: 0; font-size: 12px; }
.c-no { width: 41px; } .c-name { width: 120px; } .c-val { width: 80px; }
thead th { height: 18px; }
th { padding: 0; font-weight: 400; background: #efeddf; border: solid #807c68; border-width: 0 1px 1px 0; }
.last { border-right: 0; }
.sel { background: #ffbe6c; }
tbody tr { height: 32px; }
td { padding: 0 2px 0 0; text-align: right; font-size: 11px; border: solid #c0c0c0; border-width: 0 1px 1px 0; }
.name { padding: 0; text-align: left; vertical-align: top; }
.name div { height: 15px; padding-left: 2px; line-height: 15px; }
.name div:first-child { height: 16px; border-bottom: 1px solid #c0c0c0; }
.mid { text-align: center; padding: 0; font-size: 12px; }

.right { min-width: 0; display: flex; flex-direction: column; gap: 5px; }
.pane { display: flex; flex-direction: column; min-height: 0; }
.ref { flex: 401 1 0; }
.view { flex: 489 1 0; }
.dock { display: flex; align-items: flex-start; gap: 8px; height: 19px; padding: 0 5px 0 3px; border: solid #e0e0e0; border-width: 1px 0 0 1px; background: #9c9e9d; color: #505050; }
.dock h2 { flex: 1; font: 13px/16px "Noto Sans", "Noto Sans CJK JP", sans-serif; }
.dock svg { width: 9px; height: 9px; margin-top: 3px; }
.wide { font: 12px/18px "DejaVu Sans", sans-serif; }
.dock .wide { font-family: "DejaVu Sans", sans-serif; padding-left: 2px; }
.bar { display: flex; align-items: center; height: 25px; padding: 0 1px 2px 2px; background: linear-gradient(#d2d5d9, #b8bcc2 50%, #9298a2); }
.bar button { flex: none; display: flex; align-items: center; justify-content: center; width: 22px; height: 20px; }
.bar .dd { width: 35px; gap: 5px; }
.bar .hl { border: 1px solid #e8c080; background: linear-gradient(#fde0b8, #fdbc68 50%, #ffe8a0); }
.bar hr { flex: none; width: 1px; height: 13px; margin: 0 3px 0 4px; border: 0; background: #fff; box-shadow: -1px 0 #80868e; }
.bar select {
  width: 145px;
  height: 20px;
  margin: 0 3px 0 2px;
  border-color: #fff;
  font-family: "Noto Sans", "Noto Sans CJK JP", sans-serif;
  background:
    linear-gradient(45deg, transparent 50%, #444 50%) no-repeat right 7px center / 3px 3px,
    linear-gradient(-45deg, transparent 50%, #444 50%) no-repeat right 4px center / 3px 3px,
    linear-gradient(#b0b4ba, #b0b4ba) no-repeat right center / 14px 100%,
    #fff;
}
.split { flex: 1; display: flex; min-height: 0; }
.work { flex: 1; min-width: 0; display: flex; flex-direction: column; }
.prompt { height: 26px; font-size: 11px; line-height: 24px; background: #f0f0f0; border-bottom: 1px solid #a0a0a0; }
.canvas { flex: 1 1 0; min-height: 0; background: #000; }
.canvas svg { width: 100%; height: 100%; }
.flat { border: solid #fff; border-width: 2px 3px 0 2px; }
.vbar { width: 24px; padding-top: 2px; background: linear-gradient(90deg, #b0b4be, #c8ccd2 40%, #8c929c); }
.vbar button { display: flex; align-items: center; justify-content: center; width: 24px; height: 21px; }
.vbar hr { height: 1px; margin: 4px 5px; border: 0; background: #fff; }
.rt { display: block; width: 4px; height: 11px; margin-left: 11px; background: #555; clip-path: polygon(0 20%, 100% 50%, 0 80%); }
.sheets { display: flex; align-items: flex-start; gap: 3px; height: 21px; padding: 3px 0 0 2px; background: linear-gradient(#707070, #585858); }
.sheets button { width: 13px; height: 13px; background: #f0f0f0; }
.sheets path { fill: #444; stroke: #444; }
.tab {
  height: 18px;
  margin: -2px -11px 0 0;
  padding: 0 18px 0 13px;
  line-height: 17px;
  font-family: "Noto Sans", "Noto Sans CJK JP", sans-serif;
  background: linear-gradient(#ffd4d4, #f0e8ee 50%, #c8ccd8 55%, #eceef2);
  clip-path: polygon(0 100%, 0 80%, 12px 0, 100% 0, calc(100% - 17px) 100%);
}
.tab.on { padding: 0 15px 0 8px; font-size: 13px; font-weight: 700; background: linear-gradient(#58f058, #d0f8d0 50%, #b8e0b8 55%, #f0f8f0); clip-path: polygon(0 100%, 0 0, 100% 0, calc(100% - 15px) 100%); }
.inner { flex: 1; display: flex; flex-direction: column; border: solid #e8e8e8; border-width: 2px 3px 3px 2px; }
.views { display: flex; height: 23px; padding: 0 4px; gap: 15px; color: #fff; }
.views a { display: flex; align-items: center; gap: 2px; padding: 2px 0 4px; }
.views .on { gap: 6px; margin: 0 0 2px -5px; padding: 0 7px 0 3px; background: #e8ecf0; color: #111; border-radius: 0 0 3px 3px; }
.label3d { font: 300 19px Lato, "Open Sans", sans-serif; fill: #fff; }
.redlabel { font-size: 24px; fill: #c01818; }
```
